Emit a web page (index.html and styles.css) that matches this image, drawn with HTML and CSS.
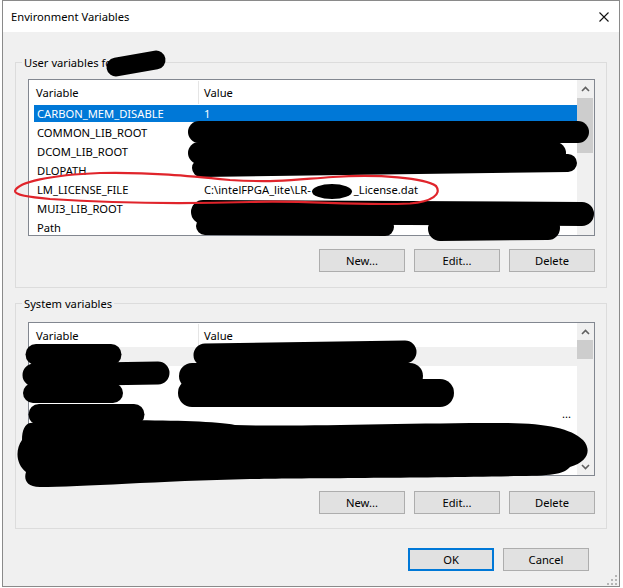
FILE: index.html
```html
<!DOCTYPE html>
<html>
<head>
<meta charset="utf-8">
<title>Environment Variables</title>
<link rel="stylesheet" href="styles.css">
</head>
<body>
<div class="win">
  <div class="titlebar">
    <span class="title">Environment Variables</span>
    <svg class="close" width="10" height="10" viewBox="0 0 10 10"><path d="M0.5 0.5 L9.5 9.5 M9.5 0.5 L0.5 9.5" stroke="#111" stroke-width="1.1" fill="none"/></svg>
  </div>
  <div class="content">
    <div class="group user">
      <div class="legend">User variables for</div>
      <div class="list user-list">
        <div class="lv">
          <div class="hdr"><div class="h1">Variable</div><div class="h2">Value</div></div>
          <div class="row sel"><div class="c1">CARBON_MEM_DISABLE</div><div class="c2">1</div></div>
          <div class="row"><div class="c1">COMMON_LIB_ROOT</div><div class="c2"></div></div>
          <div class="row"><div class="c1">DCOM_LIB_ROOT</div><div class="c2"></div></div>
          <div class="row"><div class="c1">DLOPATH</div><div class="c2"></div></div>
          <div class="row"><div class="c1">LM_LICENSE_FILE</div><div class="c2"><span class="lic">C:\intelFPGA_lite\LR-</span><span class="redact"></span>_License.dat</div></div>
          <div class="row"><div class="c1">MUI3_LIB_ROOT</div><div class="c2"></div></div>
          <div class="row"><div class="c1">Path</div><div class="c2"></div></div>
        </div>
        <div class="vs">
          <div class="arrow"><svg width="9" height="6" viewBox="0 0 9 6"><path d="M1 5 L4.5 1.5 L8 5" fill="none" stroke="#606060" stroke-width="1.6"/></svg></div>
          <div class="thumb thumb-user"></div>
        </div>
      </div>
      <div class="btns"><button>New...</button><button>Edit...</button><button>Delete</button></div>
    </div>

    <div class="group sys">
      <div class="legend">System variables</div>
      <div class="list sys-list">
        <div class="lv">
          <div class="hdr"><div class="h1">Variable</div><div class="h2">Value</div></div>
          <div class="row inactive"><div class="c1"></div><div class="c2"></div></div>
          <div class="row"><div class="c1"></div><div class="c2"></div></div>
          <div class="row"><div class="c1"></div><div class="c2"></div></div>
          <div class="row"><div class="c1"></div><div class="c2 trunc">...</div></div>
          <div class="row"><div class="c1"></div><div class="c2"></div></div>
          <div class="row"><div class="c1"></div><div class="c2"></div></div>
          <div class="row"><div class="c1"></div><div class="c2"></div></div>
        </div>
        <div class="vs">
          <div class="arrow"><svg width="9" height="6" viewBox="0 0 9 6"><path d="M1 5 L4.5 1.5 L8 5" fill="none" stroke="#606060" stroke-width="1.6"/></svg></div>
          <div class="thumb thumb-sys"></div>
          <div class="spacer"></div>
          <div class="arrow"><svg width="9" height="6" viewBox="0 0 9 6"><path d="M1 1 L4.5 4.5 L8 1" fill="none" stroke="#606060" stroke-width="1.6"/></svg></div>
        </div>
      </div>
      <div class="btns"><button>New...</button><button>Edit...</button><button>Delete</button></div>
    </div>

    <div class="dlg"><button class="ok">OK</button><button>Cancel</button></div>
    <svg class="grip" width="10" height="10" viewBox="0 0 10 10">
      <rect x="8" y="0" width="2" height="2"/>
      <rect x="4" y="4" width="2" height="2"/><rect x="8" y="4" width="2" height="2"/>
      <rect x="0" y="8" width="2" height="2"/><rect x="4" y="8" width="2" height="2"/><rect x="8" y="8" width="2" height="2"/>
    </svg>
  </div>
</div>

<svg class="ink" width="623" height="588" viewBox="0 0 623 588">
  <g fill="none" stroke="#000" stroke-linecap="round" stroke-linejoin="round">
    <path d="M116 67 L156 60" stroke-width="19"/>
    <path d="M199 132 L578 132" stroke-width="22"/>
    <path d="M199 153 L555 153" stroke-width="22"/>
    <path d="M201 168 L568 163" stroke-width="18"/>
    <path d="M203 212 L582 214" stroke-width="24"/>
    <path d="M205 226 L385 227" stroke-width="18"/>
    <path d="M440 229 L548 228" stroke-width="24"/>
    <path d="M36 354.5 L111 354.5" stroke-width="21"/>
    <path d="M34 375 L158 373" stroke-width="23"/>
    <path d="M33 393 L113 393" stroke-width="20"/>
    <path d="M39 414.5 L134 414.5" stroke-width="21"/>
    <path d="M205 355 L405 352" stroke-width="23"/>
    <path d="M192 376 L410 376" stroke-width="26"/>
    <path d="M192 393 L440 393" stroke-width="28"/>
  </g>
  <path fill="#000" d="M30 423 C60 420 200 418 235 425 C300 427 400 423 500 423 C545 423 570 428 583 440 C592 450 588 462 570 467 C565 473 555 476 520 476 C420 478 300 478 250 479 C160 481 80 487 40 487 C25 487 24 478 26 472 C16 464 15 450 22 440 C22 430 25 424 30 423 Z"/>
  <path fill="none" stroke="#e0242b" stroke-width="2.2" stroke-linejoin="round" d="M15 191 C18 182 50 175 100 173 C150 172 190 176 230 180 C280 183 300 179 333 177 C380 174 425 178 436 186 C442 194 432 202 410 203.5 C350 206 310 200 250 202 C180 204 110 203 50 199 C28 197 15 195 15 191 Z"/>
</svg>
</body>
</html>
```

FILE: styles.css
```css
* { box-sizing: border-box; }
html, body { margin: 0; padding: 0; background: #ffffff; }
body {
  position: relative;
  width: 623px;
  height: 588px;
  overflow: hidden;
  font-family: "Noto Sans", "Open Sans", sans-serif;
  font-size: 11.2px;
  color: #000;
}
.win {
  margin-left: 2px;
  width: 618px;
  height: 587px;
  border: 1px solid #8a8a8a;
  background: #f0f0f0;
  display: flex;
  flex-direction: column;
  overflow: hidden;
}
.titlebar {
  height: 31px;
  flex: none;
  background: #fff;
  display: flex;
  align-items: center;
  justify-content: space-between;
  padding: 0 10px 0 8px;
}
.title { line-height: 16px; padding-top: 1px; }
.content {
  display: flex;
  flex-direction: column;
  padding: 30px 12px 0 12px;
}
.group {
  border: 1px solid #dcdcdc;
  padding: 0 11px 15px 12px;
  display: flex;
  flex-direction: column;
}
.group.sys { margin-top: 15px; padding-bottom: 14px; }
.legend {
  align-self: flex-start;
  margin: -8px 0 0 -6px;
  padding: 1px 2px 0;
  height: 15px;
  line-height: 14px;
  background: #f0f0f0;
}
.list {
  border: 1px solid #828790;
  background: #fff;
  display: flex;
  overflow: hidden;
}
.user-list { margin-top: 9px; height: 157px; }
.sys-list { margin-top: 11px; height: 154px; }
.lv { flex: 1; min-width: 0; overflow: hidden; }
.hdr { height: 24px; display: flex; padding-top: 1px; line-height: 23px; }
.h1 { width: 170px; padding-left: 7px; border-right: 1px solid #e5e5e5; }
.h2 { padding-left: 5px; }
.row {
  height: 19px;
  padding-top: 1px;
  line-height: 18px;
  margin-left: 5px;
  display: flex;
  white-space: nowrap;
}
.row.sel {
  background: #0078d7;
  color: #fff;
  padding-top: 0;
  border-top: 1px solid #fff;
  border-bottom: 1px solid #fff;
  line-height: 18px;
}
.row.inactive { background: #f0f0f0; }
.c1 { width: 164px; padding-left: 3px; flex: none; }
.c2 { flex: 1; padding-left: 6px; }
.c2.trunc { text-align: right; padding-right: 6px; }
.redact {
  display: inline-block;
  width: 40px;
  height: 15px;
  margin: 0 2px 0 1px;
  border-radius: 50%;
  background: #000;
  vertical-align: middle;
}
.vs {
  width: 17px;
  flex: none;
  background: #f0f0f0;
  display: flex;
  flex-direction: column;
}
.arrow {
  height: 17px;
  flex: none;
  display: flex;
  align-items: center;
  justify-content: center;
}
.thumb { background: #cdcdcd; margin-right: 1px; flex: none; }
.thumb-user { margin-top: 1px; height: 55px; }
.thumb-sys { height: 19px; }
.spacer { flex: 1; }
.btns {
  display: flex;
  justify-content: flex-end;
  gap: 9px;
  margin-top: 13px;
}
.sys .btns { margin-top: 15px; }
button {
  width: 86px;
  height: 23px;
  padding: 0;
  margin: 0;
  border: 1px solid #adadad;
  background: #e1e1e1;
  font: inherit;
  color: #000;
  line-height: 20px;
}
button.ok { border: 2px solid #0078d7; }
.dlg {
  display: flex;
  justify-content: flex-end;
  gap: 9px;
  margin-top: 19px;
  margin-right: 18px;
}
.grip {
  align-self: flex-end;
  margin-top: 4px;
  margin-right: -10px;
  fill: #b5b5b5;
}
.ink {
  position: absolute;
  left: 0;
  top: 0;
  pointer-events: none;
}
```
